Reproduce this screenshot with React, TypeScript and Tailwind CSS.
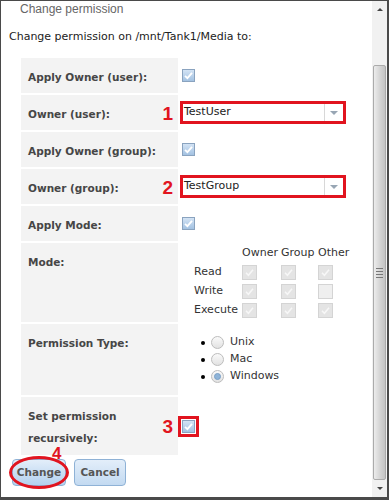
import React from "react";

function Check({ variant = "on" }: { variant?: "on" | "dis" | "off" }) {
  if (variant === "on") {
    return (
      <span className="w-[13px] h-[13px] border border-[#8aa3bf] bg-gradient-to-b from-[#d3e3f4] to-[#a3c2e2] flex items-center justify-center">
        <svg width="11" height="11" viewBox="0 0 11 11">
          <path d="M2 5.8 L4.4 8.2 L9 2.8" fill="none" stroke="#fff" strokeWidth="1.8" />
        </svg>
      </span>
    );
  }
  if (variant === "dis") {
    return (
      <span className="w-[15px] h-[15px] border border-[#d4d4d4] bg-[#e4e4e4] flex items-center justify-center">
        <svg width="11" height="11" viewBox="0 0 11 11">
          <path d="M2 5.8 L4.4 8.2 L9 2.8" fill="none" stroke="#f7f7f7" strokeWidth="1.6" />
        </svg>
      </span>
    );
  }
  return <span className="w-[15px] h-[15px] border border-[#d4d4d4] bg-[#efefef]" />;
}

function Radio({ on = false }: { on?: boolean }) {
  return (
    <span className="w-[13px] h-[13px] rounded-full border border-[#bdbdbd] bg-gradient-to-b from-[#fafafa] to-[#e2e2e2] flex items-center justify-center">
      {on && <span className="w-[7px] h-[7px] rounded-full bg-[#8fb4d8] border border-[#7aa0c6]" />}
    </span>
  );
}

function Label({ children, h, tag }: { children: React.ReactNode; h: string; tag?: string }) {
  return (
    <div className={`relative w-[157px] shrink-0 bg-[#f3f3f3] px-[7px] pt-[8px] leading-[22px] text-[10.5px] font-bold text-[#464646] ${h}`}>
      {children}
      {tag && (
        <span className="absolute right-[5px] top-1/2 -translate-y-1/2 font-['Liberation_Sans'] text-[19px] font-bold leading-none text-[#e1141f]">
          {tag}
        </span>
      )}
    </div>
  );
}

function SelectBox({ value }: { value: string }) {
  return (
    <div className="ml-[2px] w-[166px] h-[23px] border-[3px] border-[#e1141f] bg-white flex items-center">
      <span className="flex-1 pl-[1px] text-[11px] text-[#222]">{value}</span>
      <span className="w-[19px] h-full border-l border-[#d8d8d8] flex items-center justify-center">
        <span className="w-0 h-0 border-l-[4px] border-r-[4px] border-t-[4px] border-l-transparent border-r-transparent border-t-[#98a6b4]" />
      </span>
    </div>
  );
}

export default function App() {
  const perms: [string, ("on" | "dis" | "off")[]][] = [
    ["Read", ["dis", "dis", "dis"]],
    ["Write", ["dis", "dis", "off"]],
    ["Execute", ["dis", "dis", "dis"]],
  ];

  return (
    <div className="w-[389px] h-[500px] bg-white border-l border-t border-r-2 border-b-[3px] border-[#4a4a4a] flex overflow-hidden font-['DejaVu_Sans',sans-serif] text-[#2b2b2b]">
      <div className="flex-1 relative">
        <div className="pl-[19px] h-[16px] leading-[16px] font-['Liberation_Sans',sans-serif] text-[12px] text-[#666]">
          Change permission
        </div>
        <div className="pl-[8px] mt-[12px] h-[16px] leading-[16px] text-[11px] text-[#222]">
          Change permission on /mnt/Tank1/Media to:
        </div>

        <div className="ml-[20px] mt-[13px] flex flex-col gap-[2px]">
          <div className="flex">
            <Label h="h-[35px]">Apply Owner (user):</Label>
            <div className="pl-[4px] flex items-center">
              <Check />
            </div>
          </div>
          <div className="flex">
            <Label h="h-[35px]" tag="1">Owner (user):</Label>
            <div className="flex items-center">
              <SelectBox value="TestUser" />
            </div>
          </div>
          <div className="flex">
            <Label h="h-[35px]">Apply Owner (group):</Label>
            <div className="pl-[4px] flex items-center">
              <Check />
            </div>
          </div>
          <div className="flex">
            <Label h="h-[35px]" tag="2">Owner (group):</Label>
            <div className="flex items-center">
              <SelectBox value="TestGroup" />
            </div>
          </div>
          <div className="flex">
            <Label h="h-[35px]">Apply Mode:</Label>
            <div className="pl-[4px] flex items-center">
              <Check />
            </div>
          </div>
          <div className="flex">
            <Label h="h-[79px]">Mode:</Label>
            <div className="pl-[16px] pt-[1px] text-[11px] text-[#333]">
              <div className="grid grid-cols-[48px_39px_37px_40px] auto-rows-[19px] items-center">
                <span />
                <span>Owner</span>
                <span>Group</span>
                <span>Other</span>
                {perms.map(([name, cells]) => (
                  <React.Fragment key={name}>
                    <span>{name}</span>
                    {cells.map((c, i) => (
                      <span key={i} className="flex">
                        <Check variant={c} />
                      </span>
                    ))}
                  </React.Fragment>
                ))}
              </div>
            </div>
          </div>
          <div className="flex">
            <Label h="h-[71px]">Permission Type:</Label>
            <div className="pl-[23px] pt-[10px] text-[11px] text-[#333]">
              {[
                ["Unix", false],
                ["Mac", false],
                ["Windows", true],
              ].map(([name, on]) => (
                <div key={name as string} className="h-[17px] flex items-center">
                  <span className="w-[4px] h-[4px] rounded-full bg-black" />
                  <span className="ml-[6px]">
                    <Radio on={on as boolean} />
                  </span>
                  <span className="ml-[6px]">{name as string}</span>
                </div>
              ))}
            </div>
          </div>
          <div className="flex">
            <Label h="h-[58px]" tag="3">
              Set permission
              <br />
              recursively:
            </Label>
            <div className="flex items-center">
              <span className="w-[21px] h-[21px] border-[3px] border-[#e1141f] flex items-center justify-center">
                <Check />
              </span>
            </div>
          </div>
        </div>

        <div className="relative mt-[4px] ml-[11px] flex gap-[8px]">
          <span className="absolute left-[40px] top-[-14px] font-['Liberation_Sans'] text-[17px] font-bold leading-none text-[#e1141f]">
            4
          </span>
          <div className="relative">
            <button className="w-[54px] h-[27px] rounded-[4px] border border-[#8fb2d6] bg-gradient-to-b from-[#e3eefa] to-[#b4d1ee] text-[10.5px] font-bold text-[#555]">
              Change
            </button>
            <span className="absolute left-[-3px] top-[-3px] w-[60px] h-[33px] rounded-[50%] border-[3px] border-[#e1141f]" />
          </div>
          <button className="w-[52px] h-[27px] rounded-[4px] border border-[#8fb2d6] bg-gradient-to-b from-[#e3eefa] to-[#c3daf1] text-[10.5px] font-bold text-[#555]">
            Cancel
          </button>
        </div>
      </div>

      <div className="w-[15px] h-full flex flex-col bg-[#f1f1f1]">
        <div className="h-[64px] flex justify-center pt-[7px]">
          <span className="w-0 h-0 border-l-[3px] border-r-[3px] border-b-[3px] border-l-transparent border-r-transparent border-b-[#444]" />
        </div>
        <div className="h-[415px] mx-[1px] border border-[#ababab] rounded-[2px] bg-gradient-to-r from-[#ececec] via-[#d6d6d6] to-[#c4c4c4] flex items-center justify-center">
          <div className="flex flex-col gap-[2px]">
            <span className="w-[7px] h-px bg-[#777]" />
            <span className="w-[7px] h-px bg-[#777]" />
            <span className="w-[7px] h-px bg-[#777]" />
            <span className="w-[7px] h-px bg-[#777]" />
          </div>
        </div>
        <div className="flex-1 flex justify-center items-center">
          <span className="w-0 h-0 border-l-[3px] border-r-[3px] border-t-[3px] border-l-transparent border-r-transparent border-t-[#444]" />
        </div>
      </div>
    </div>
  );
}
